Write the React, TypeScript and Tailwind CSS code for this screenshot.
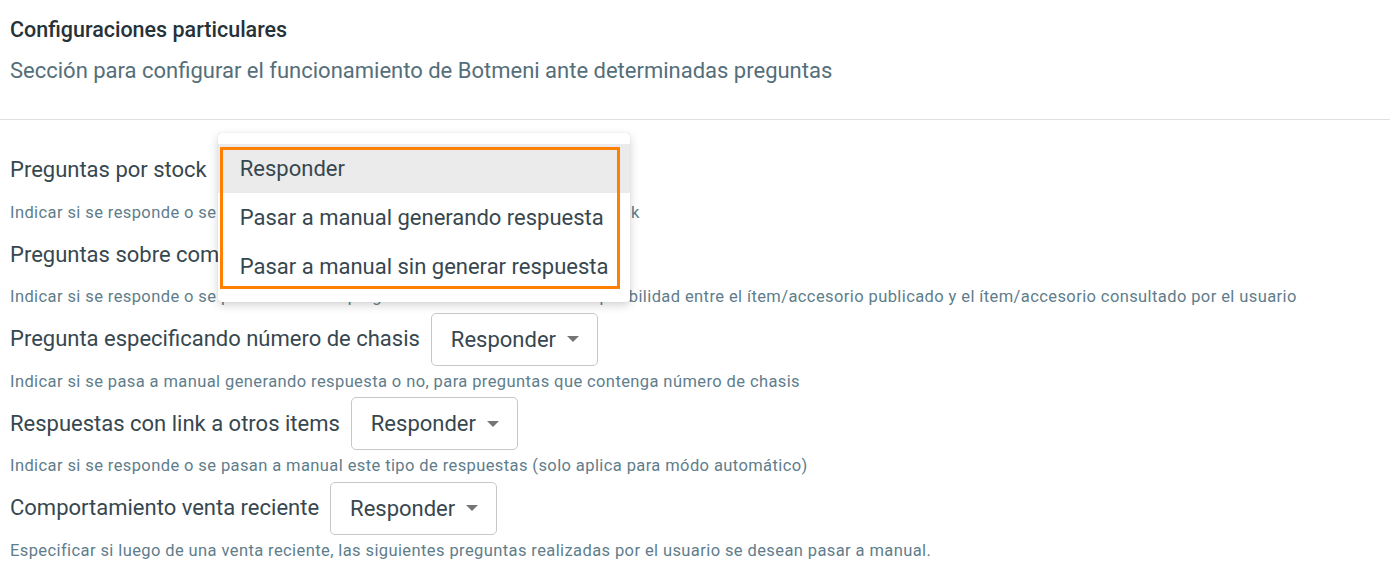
import React from "react";

const font = { fontFamily: "Roboto, 'Noto Sans', sans-serif" };

function Select({ children }: { children?: React.ReactNode }) {
  return (
    <div className="relative shrink-0">
      <div className="flex h-[53px] w-[167px] items-center rounded-[5px] border border-[#c7c7c7] bg-white pl-[19px] text-[22px] text-[#37474f]">
        <span>Responder</span>
        <span className="ml-[11px] h-0 w-0 border-x-[6px] border-t-[6px] border-x-transparent border-t-[#757575]" />
      </div>
      {children}
    </div>
  );
}

function Row({
  label,
  desc,
  menu,
}: {
  label: string;
  desc: string;
  menu?: React.ReactNode;
}) {
  return (
    <div className="flex flex-col">
      <div className="flex items-center gap-[11px]">
        <span className="text-[22px] leading-[26px] text-[#37474f]">{label}</span>
        <Select>{menu}</Select>
      </div>
      <div className="mt-[6px] mb-[5.5px] text-[16.5px] leading-[20px] tracking-[0.4px] text-[#607d8b] whitespace-nowrap">
        {desc}
      </div>
    </div>
  );
}

function Menu() {
  const items = [
    "Responder",
    "Pasar a manual generando respuesta",
    "Pasar a manual sin generar respuesta",
  ];
  return (
    <div className="absolute left-0 top-[-11px] z-10 w-[412px] rounded-[4px] bg-white py-[11px] shadow-[0_3px_10px_rgba(0,0,0,0.18),0_0_1px_rgba(0,0,0,0.15)]">
      {items.map((t, i) => (
        <div
          key={t}
          className={
            "flex h-[49px] items-center px-[22px] text-[22px] text-[#37474f] whitespace-nowrap " +
            (i === 0 ? "bg-[#ebebeb]" : "")
          }
        >
          {t}
        </div>
      ))}
      <div className="pointer-events-none absolute left-[2px] top-[14px] h-[142px] w-[400px] border-[3px] border-[#ff8000]" />
    </div>
  );
}

export default function App() {
  return (
    <div className="min-h-[582px] w-full bg-white" style={font}>
      <div className="px-[10px] pt-[18px]">
        <div className="text-[21.5px] leading-[24px] font-medium text-[#263238]">
          Configuraciones particulares
        </div>
        <div className="mt-[17px] text-[22px] leading-[24px] text-[#546e7a]">
          Sección para configurar el funcionamiento de Botmeni ante determinadas preguntas
        </div>
      </div>
      <div className="mt-[36px] h-px w-full bg-[#e0e0e0]" />
      <div className="flex flex-col px-[10px] pt-[23.5px]">
        <Row
          label="Preguntas por stock"
          desc="Indicar si se responde o se pasan a manual preguntas relacionadas con ese stock"
          menu={<Menu />}
        />
        <Row
          label="Preguntas sobre compatibilidad"
          desc="Indicar si se responde o se pasan a manual preguntas relacionadas con compatibilidad entre el ítem/accesorio publicado y el ítem/accesorio consultado por el usuario"
        />
        <Row
          label="Pregunta especificando número de chasis"
          desc="Indicar si se pasa a manual generando respuesta o no, para preguntas que contenga número de chasis"
        />
        <Row
          label="Respuestas con link a otros items"
          desc="Indicar si se responde o se pasan a manual este tipo de respuestas (solo aplica para módo automático)"
        />
        <Row
          label="Comportamiento venta reciente"
          desc="Especificar si luego de una venta reciente, las siguientes preguntas realizadas por el usuario se desean pasar a manual."
        />
      </div>
    </div>
  );
}
